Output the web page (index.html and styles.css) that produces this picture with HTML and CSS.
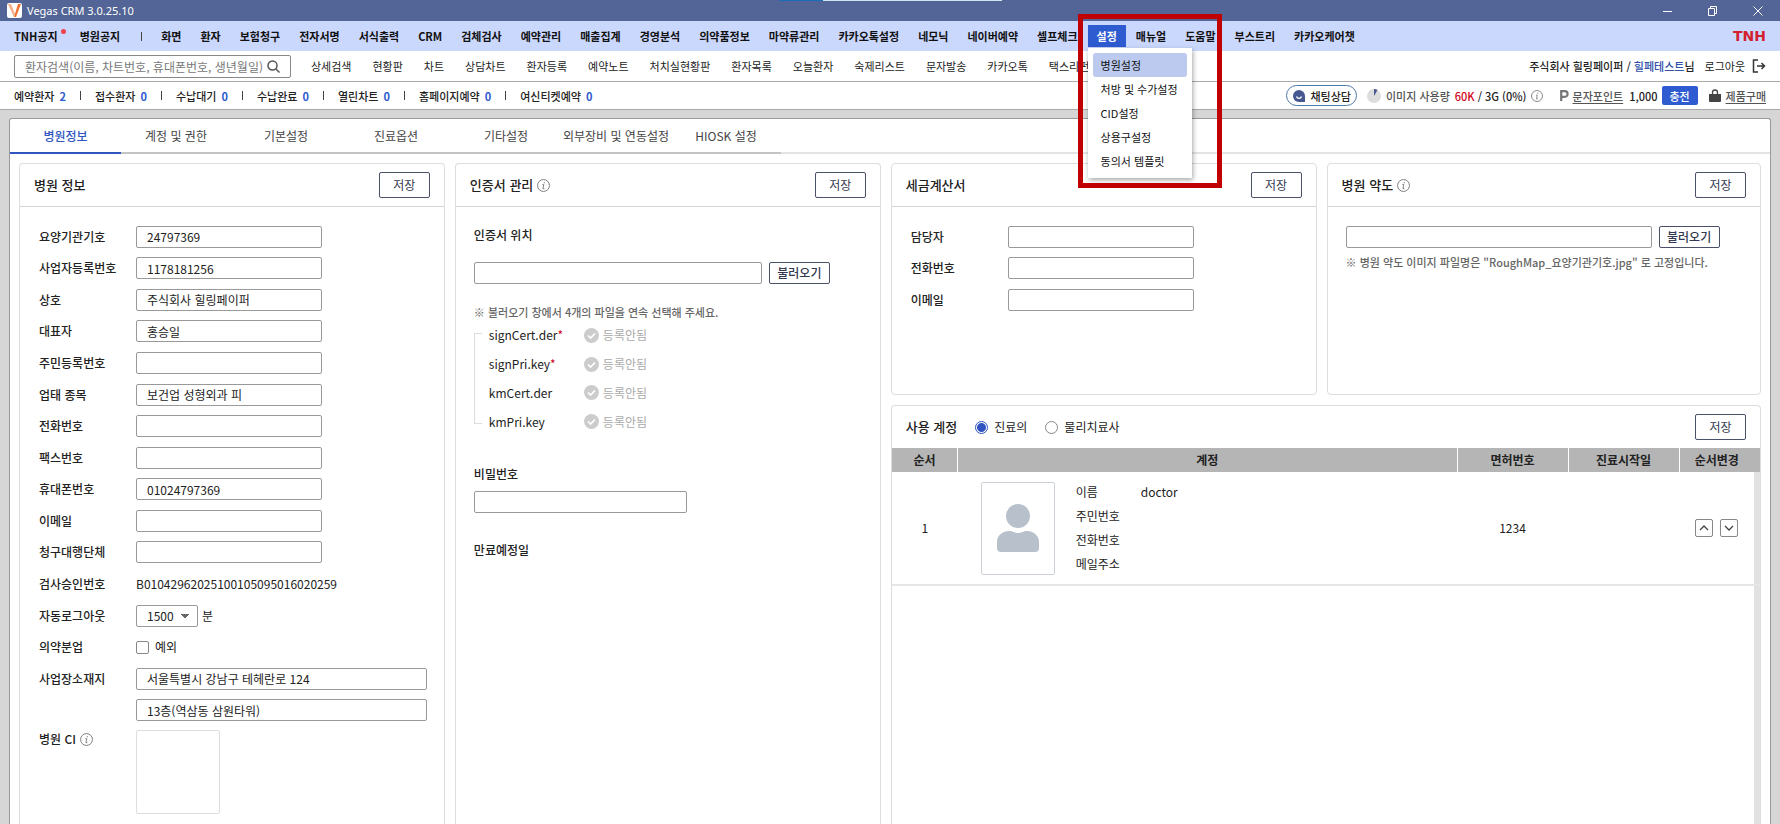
FILE: index.html
```html
<!DOCTYPE html>
<html lang="ko">
<head>
  <meta charset="UTF-8" />
  <meta name="viewport" content="width=device-width, initial-scale=1.0">
  <title>Vegas CRM 3.0.25.10</title>
  <link rel="stylesheet" href="styles.css">
</head>
<body>
  <!-- shared icons -->
  <svg class="sprite" width="0" height="0">
    <symbol id="info" viewBox="0 0 14 14">
      <circle cx="7" cy="7" r="6.4" fill="none" stroke="#777" />
      <path d="M7.8 3.2v1.4M5.800 6h1.500L6.400 10.400h1.600" fill="none" stroke="#777" />
    </symbol>
    <symbol id="check" viewBox="0 0 15 15">
      <circle cx="7.5" cy="7.5" r="7.5" fill="#ccc" />
      <path d="M4 7.5l2.6 2.6L11 5.5" fill="none" stroke="#fff" stroke-width="1.7" />
    </symbol>
  </svg>

  <header class="titlebar">
    <svg class="app-icon" width="15" height="15" viewBox="0 0 15 15">
      <rect width="15" height="15" rx="2" fill="#fff" />
      <path d="M1 1h3l4 10-1 3z" fill="#f3b08a" />
      <path d="M7 14L11 1h3L9 14z" fill="#ee7434" />
    </svg>
    <h1>Vegas CRM 3.0.25.10</h1>
    <div class="window-buttons">
      <button aria-label="최소화"><svg width="12" height="12"><path d="M1 6.500h9" stroke="#fff" /></svg></button>
      <button aria-label="이전 크기로"><svg width="12" height="12"><path d="M1.500 3.500h6v7h-6zM3.500 3.500v-2h6v7h-2" fill="none" stroke="#fff" /></svg></button>
      <button aria-label="닫기"><svg width="12" height="12"><path d="M1.500 1.500l9 9m0-9l-9 9" stroke="#fff" /></svg></button>
    </div>
    <span class="top-strip"></span>
  </header>

  <nav class="menubar">
    <a href="#" class="has-dot">TNH공지</a>
    <a href="#">병원공지</a>
    <span class="bar"></span>
    <a href="#">화면</a>
    <a href="#">환자</a>
    <a href="#">보험청구</a>
    <a href="#">전자서명</a>
    <a href="#">서식출력</a>
    <a href="#">CRM</a>
    <a href="#">검체검사</a>
    <a href="#">예약관리</a>
    <a href="#">매출집계</a>
    <a href="#">경영분석</a>
    <a href="#">의약품정보</a>
    <a href="#">마약류관리</a>
    <a href="#">카카오톡설정</a>
    <a href="#">네모닉</a>
    <a href="#">네이버예약</a>
    <a href="#">셀프체크</a>
    <div class="menu-open">
      <a href="#">설정</a>
      <div class="dropdown">
        <a href="#" class="selected">병원설정</a>
        <a href="#">처방 및 수가설정</a>
        <a href="#">CID설정</a>
        <a href="#">상용구설정</a>
        <a href="#">동의서 템플릿</a>
      </div>
      <span class="highlight"></span>
    </div>
    <a href="#">매뉴얼</a>
    <a href="#">도움말</a>
    <a href="#">부스트리</a>
    <a href="#">카카오케어챗</a>
    <span class="brand">TNH</span>
  </nav>

  <div class="toolbar">
    <div class="search">
      <input type="text" aria-label="환자검색" placeholder="환자검색(이름, 차트번호, 휴대폰번호, 생년월일)">
      <svg width="13" height="13" viewBox="0 0 13 13"><circle cx="5.500" cy="5.500" r="4.500" fill="none" stroke="#555" stroke-width="1.500" /><path d="M9 9l3.500 3.500" stroke="#555" stroke-width="1.500" /></svg>
    </div>
    <a href="#">상세검색</a>
    <a href="#">현황판</a>
    <a href="#">차트</a>
    <a href="#">상담차트</a>
    <a href="#">환자등록</a>
    <a href="#">예약노트</a>
    <a href="#">처치실현황판</a>
    <a href="#">환자목록</a>
    <a href="#">오늘환자</a>
    <a href="#">숙제리스트</a>
    <a href="#">문자발송</a>
    <a href="#">카카오톡</a>
    <a href="#">택스리펀드</a>
    <div class="user">
      <span>주식회사 힐링페이퍼 / <em>힐페테스트</em>님</span>
      <a href="#" class="logout">로그아웃
        <svg width="14" height="14" viewBox="0 0 14 14"><path d="M6 1H1.500v12H6M5 7h7M9.500 4l3 3-3 3" fill="none" stroke="#333" stroke-width="1.500" /></svg>
      </a>
    </div>
  </div>

  <div class="statusbar">
    <span>예약환자<b>2</b></span><i></i>
    <span>접수환자<b>0</b></span><i></i>
    <span>수납대기<b>0</b></span><i></i>
    <span>수납완료<b>0</b></span><i></i>
    <span>열린차트<b>0</b></span><i></i>
    <span>홈페이지예약<b>0</b></span><i></i>
    <span>여신티켓예약<b>0</b></span>
    <div class="status-right">
      <button class="chat">
        <svg width="12" height="12" viewBox="0 0 12 12"><path d="M6 0a6 6 0 1 0 0 12h6V6a6 6 0 0 0-6-6z" fill="#46588f" /><path d="M3.500 6.500a2.600 2.600 0 0 0 5 0" fill="none" stroke="#fff" stroke-width="1.300" /></svg>
        채팅상담
      </button>
      <svg class="pie" width="14" height="14" viewBox="0 0 14 14"><circle cx="7" cy="7" r="7" fill="#ddd" /><path d="M7 7V0a7 7 0 0 1 3.500 1z" fill="#46588f" /></svg>
      <span class="usage">이미지 사용량</span>
      <span class="used">60K</span>
      <span class="total">/ 3G (0%)</span>
      <svg class="info-small" width="12" height="12"><use href="#info" /></svg>
      <svg class="point-icon" width="9" height="11" viewBox="0 0 9 11"><path d="M1.200 11V1.200h3.600a2.800 2.800 0 0 1 0 5.600H1.200" fill="none" stroke="#777" stroke-width="2.200" /></svg>
      <a href="#">문자포인트</a>
      <span class="points">1,000</span>
      <button class="charge">충전</button>
      <svg class="bag" width="12" height="13" viewBox="0 0 12 13"><path d="M0 5h12v7a1 1 0 0 1-1 1H1a1 1 0 0 1-1-1z" fill="#444" /><path d="M3.500 6V3.500a2.500 2.500 0 0 1 5 0V6" fill="none" stroke="#444" stroke-width="1.300" /></svg>
      <a href="#">제품구매</a>
    </div>
  </div>

  <main class="page">
    <nav class="tabs">
      <a href="#" class="active">병원정보</a>
      <a href="#">계정 및 권한</a>
      <a href="#">기본설정</a>
      <a href="#">진료옵션</a>
      <a href="#">기타설정</a>
      <a href="#">외부장비 및 연동설정</a>
      <a href="#">HIOSK 설정</a>
    </nav>

    <div class="cards">
      <section class="card tall">
        <div class="card-head">
          <h2>병원 정보</h2>
          <button class="save">저장</button>
        </div>
        <div class="form form-hospital">
          <div class="row"><label for="orgNo">요양기관기호</label><input id="orgNo" type="text" value="24797369"></div>
          <div class="row"><label for="bizNo">사업자등록번호</label><input id="bizNo" type="text" value="1178181256"></div>
          <div class="row"><label for="company">상호</label><input id="company" type="text" value="주식회사 힐링페이퍼"></div>
          <div class="row"><label for="ceo">대표자</label><input id="ceo" type="text" value="홍승일"></div>
          <div class="row"><label for="rrn">주민등록번호</label><input id="rrn" type="text"></div>
          <div class="row"><label for="bizType">업태 종목</label><input id="bizType" type="text" value="보건업 성형외과 피"></div>
          <div class="row"><label for="tel">전화번호</label><input id="tel" type="text"></div>
          <div class="row"><label for="fax">팩스번호</label><input id="fax" type="text"></div>
          <div class="row"><label for="mobile">휴대폰번호</label><input id="mobile" type="text" value="01024797369"></div>
          <div class="row"><label for="email">이메일</label><input id="email" type="text"></div>
          <div class="row"><label for="agency">청구대행단체</label><input id="agency" type="text"></div>
          <div class="row"><span class="label">검사승인번호</span><span>B01042962025100105095016020259</span></div>
          <div class="row"><label for="logout">자동로그아웃</label>
            <select id="logout"><option>1500</option></select><span class="unit">분</span>
          </div>
          <div class="row"><span class="label">의약분업</span><input id="except" type="checkbox"><label for="except" class="option">예외</label></div>
          <div class="row"><label for="addr1">사업장소재지</label><input id="addr1" class="wide" type="text" value="서울특별시 강남구 테헤란로 124"></div>
          <div class="row"><label for="addr2"></label><input id="addr2" class="wide" type="text" aria-label="상세주소" value="13층(역삼동 삼원타워)"></div>
        </div>
        <div class="ci">
          <span class="label">병원 CI <svg width="13" height="13"><use href="#info" /></svg></span>
          <div class="ci-box"></div>
        </div>
      </section>

      <section class="card tall">
        <div class="card-head">
          <h2>인증서 관리</h2>
          <svg width="13" height="13"><use href="#info" /></svg>
          <button class="save">저장</button>
        </div>
        <div class="cert">
          <label for="certPath">인증서 위치</label>
          <div class="file-row">
            <input id="certPath" type="text">
            <button class="load">불러오기</button>
          </div>
          <p class="note">※ 불러오기 창에서 4개의 파일을 연속 선택해 주세요.</p>
          <ul class="files">
            <li><span>signCert.der<em>*</em></span><svg width="15" height="15"><use href="#check" /></svg>등록안됨</li>
            <li><span>signPri.key<em>*</em></span><svg width="15" height="15"><use href="#check" /></svg>등록안됨</li>
            <li><span>kmCert.der</span><svg width="15" height="15"><use href="#check" /></svg>등록안됨</li>
            <li><span>kmPri.key</span><svg width="15" height="15"><use href="#check" /></svg>등록안됨</li>
          </ul>
          <label for="certPw">비밀번호</label>
          <input id="certPw" type="password">
          <p class="expire">만료예정일</p>
        </div>
      </section>

      <section class="card">
        <div class="card-head">
          <h2>세금계산서</h2>
          <button class="save">저장</button>
        </div>
        <div class="form form-tax">
          <div class="row"><label for="manager">담당자</label><input id="manager" type="text"></div>
          <div class="row"><label for="taxTel">전화번호</label><input id="taxTel" type="text"></div>
          <div class="row"><label for="taxEmail">이메일</label><input id="taxEmail" type="text"></div>
        </div>
      </section>

      <section class="card">
        <div class="card-head">
          <h2>병원 약도</h2>
          <svg width="13" height="13"><use href="#info" /></svg>
          <button class="save">저장</button>
        </div>
        <div class="map">
          <div class="file-row">
            <input type="text" aria-label="약도 파일">
            <button class="load">불러오기</button>
          </div>
          <p class="note">※ 병원 약도 이미지 파일명은 "RoughMap_요양기관기호.jpg" 로 고정입니다.</p>
        </div>
      </section>

      <section class="card accounts">
        <div class="card-head">
          <h2>사용 계정</h2>
          <input id="doctor" type="radio" name="role" checked><label for="doctor">진료의</label>
          <input id="therapist" type="radio" name="role"><label for="therapist">물리치료사</label>
          <button class="save">저장</button>
        </div>
        <table>
          <colgroup><col class="c-no"><col><col class="c-mid"><col class="c-mid"><col class="c-order"><col class="c-scroll"></colgroup>
          <thead>
            <tr><th>순서</th><th>계정</th><th>면허번호</th><th>진료시작일</th><th>순서변경</th><th class="end"></th></tr>
          </thead>
          <tbody>
            <tr>
              <td>1</td>
              <td>
                <div class="person">
                  <div class="photo">
                    <svg width="42" height="48" viewBox="0 0 42 48" fill="#b8c0cc"><circle cx="21" cy="12" r="12" /><path d="M0 44V38C0 31 6 27 12 27c4 0 5 2 9 2s5-2 9-2c6 0 12 4 12 11v6a4 4 0 0 1-4 4H4a4 4 0 0 1-4-4z" /></svg>
                  </div>
                  <dl>
                    <dt>이름</dt><dd>doctor</dd>
                    <dt>주민번호</dt><dd></dd>
                    <dt>전화번호</dt><dd></dd>
                    <dt>메일주소</dt><dd></dd>
                  </dl>
                </div>
              </td>
              <td>1234</td>
              <td></td>
              <td>
                <div class="order">
                  <button aria-label="위로"><svg width="12" height="12"><path d="M2 8l4-4 4 4" fill="none" stroke="#444" stroke-width="1.300" /></svg></button>
                  <button aria-label="아래로"><svg width="12" height="12"><path d="M2 4l4 4 4-4" fill="none" stroke="#444" stroke-width="1.300" /></svg></button>
                </div>
              </td>
              <td class="end"></td>
            </tr>
          </tbody>
        </table>
        <div class="rest"></div>
      </section>
    </div>
  </main>
</body>
</html>
```
FILE: styles.css
```css
* {
  box-sizing: border-box;
}
body {
  margin: 0;
  height: 100vh;
  display: flex;
  flex-direction: column;
  overflow: hidden;
  background: #d6d6d6;
  color: #222;
  font-family: "Noto Sans CJK KR", sans-serif;
  font-size: 12px;
  line-height: 18px;
}
a {
  color: inherit;
  text-decoration: none;
}
button, input, select {
  font: inherit;
  color: inherit;
}
button {
  padding: 0;
  background: #fff;
  border: 1px solid #4a5068;
  border-radius: 2px;
  color: #333850;
}
h1, h2, p, ul, dl, dd {
  margin: 0;
  padding: 0;
}
em {
  font-style: normal;
}
svg {
  flex: none;
}
.sprite {
  position: absolute;
}

/* title bar */
.titlebar {
  position: relative;
  display: flex;
  align-items: center;
  flex: none;
  height: 21px;
  padding: 0 16px 0 7px;
  background: #536596;
  color: #fff;
}
.titlebar h1 {
  margin-left: 5px;
  font: 11px "Noto Sans", sans-serif;
}
.window-buttons {
  display: flex;
  gap: 33px;
  margin-left: auto;
}
.window-buttons button {
  display: flex;
  background: none;
  border: none;
}
.top-strip {
  position: absolute;
  top: 0;
  left: 779px;
  width: 223px;
  height: 1px;
  background: linear-gradient(to right, #1b6db8 44px, #cfe3f2 44px);
}

/* menu */
.menubar {
  display: flex;
  align-items: center;
  flex: none;
  gap: 1px;
  height: 30px;
  padding: 0 14px 0 5px;
  background: #cbd8fe;
  color: #111;
  font-size: 11px;
  font-weight: bold;
}
.menubar > a, .menu-open > a {
  display: block;
  padding: 0 9px;
  line-height: 22px;
  white-space: nowrap;
}
.has-dot {
  position: relative;
  margin-right: 3px;
}
.has-dot::after {
  content: "";
  position: absolute;
  top: 4px;
  right: 1px;
  width: 5px;
  height: 5px;
  border-radius: 50%;
  background: #f0404c;
}
.bar {
  width: 1px;
  height: 9px;
  margin: 0 9px 0 11px;
  background: #444;
}
.menu-open {
  position: relative;
  z-index: 2;
}
.menu-open > a {
  background: #2f5bd0;
  color: #fff;
}
.dropdown {
  position: absolute;
  top: 23px;
  left: 0;
  width: 104px;
  padding: 5px;
  background: #fff;
  box-shadow: 1px 2px 5px rgba(0, 0, 0, 0.35);
  font-weight: normal;
}
.dropdown a {
  display: block;
  padding-left: 8px;
  line-height: 24px;
  border-radius: 3px;
  white-space: nowrap;
}
.dropdown .selected {
  background: #bccaf0;
}
.highlight {
  position: absolute;
  top: -11px;
  left: -10px;
  width: 144px;
  height: 174px;
  border: 5px solid #c00000;
  pointer-events: none;
}
.brand {
  margin-left: auto;
  color: #d3202f;
  font: bold 14px "DejaVu Sans", sans-serif;
}

/* search and shortcuts */
.toolbar {
  display: flex;
  align-items: center;
  flex: none;
  gap: 21px;
  height: 31px;
  padding: 0 14px;
  background: #fff;
  border-bottom: 1px solid #aaa;
  font-size: 11px;
  white-space: nowrap;
}
.search {
  display: flex;
  align-items: center;
  width: 277px;
  height: 23px;
  margin-right: -1px;
  padding: 0 10px;
  border: 1px solid #888;
  border-radius: 2px;
}
.user {
  display: flex;
  gap: 10px;
  margin-left: auto;
}
.user span {
  font-weight: 500;
}
.user em {
  color: #2f4fa8;
}
.logout {
  display: flex;
  align-items: center;
  gap: 7px;
}

/* counters */
.statusbar {
  display: flex;
  align-items: center;
  flex: none;
  gap: 14px;
  height: 28px;
  padding: 0 14px;
  background: #fff;
  border-bottom: 1px solid #aaa;
  font-size: 11px;
  font-weight: 500;
  white-space: nowrap;
}
.statusbar b {
  margin-left: 5px;
  color: #2f5bd0;
  font-weight: bold;
}
.statusbar i {
  width: 1px;
  height: 9px;
  background: #444;
}
.status-right {
  display: flex;
  align-items: center;
  margin-left: auto;
}
.status-right a {
  color: #555;
  text-decoration: underline;
  text-underline-offset: 2px;
}
.chat {
  display: flex;
  align-items: center;
  gap: 5px;
  height: 21px;
  padding: 0 5px 0 6px;
  border-color: #4a7aa8;
  border-radius: 11px;
  color: #222;
  font-weight: 500;
}
.pie {
  margin: 0 5px 0 10px;
}
.usage {
  color: #555;
}
.used {
  margin: 0 3px 0 5px;
  color: #d0021b;
}
.info-small {
  margin: 0 17px 0 4px;
}
.point-icon {
  margin-right: 4px;
}
.points {
  margin: 0 4px 0 6px;
}
.charge {
  width: 36px;
  height: 19px;
  background: #2f5bd0;
  border: none;
  color: #fff;
  font-weight: 500;
}
.bag {
  margin: 0 5px 0 11px;
}

/* page */
.page {
  display: flex;
  flex-direction: column;
  flex: 1;
  min-height: 0;
  margin: 8px 9px 0;
  background: #fff;
  border: 1px solid #999;
  border-bottom: none;
  border-radius: 3px 3px 0 0;
}
.tabs {
  display: flex;
  flex: none;
  border-bottom: 2px solid #e4e4e4;
}
.tabs a {
  width: 110px;
  height: 35px;
  margin-bottom: -2px;
  border-bottom: 2px solid #c4c4c4;
  color: #444;
  line-height: 34px;
  text-align: center;
  white-space: nowrap;
}
.tabs .active {
  width: 111px;
  border-color: #3055c0;
  color: #3055c0;
  font-weight: 500;
}
.cards {
  display: grid;
  grid-template-columns: 50fr 50fr 50fr 51fr;
  grid-template-rows: 232px 1fr;
  gap: 10px;
  flex: 1;
  min-height: 0;
  padding: 9px 9px 0;
}
.card {
  min-width: 0;
  border: 1px solid #ddd;
  border-radius: 4px;
}
.tall {
  grid-row: 1 / 3;
  border-bottom: none;
  border-radius: 4px 4px 0 0;
}
.card-head {
  display: flex;
  align-items: center;
  height: 43px;
  padding: 0 14px;
  border-bottom: 1px solid #d4d4d4;
}
.card-head h2 {
  margin-right: 4px;
  font-size: 13px;
  font-weight: 500;
}
.save {
  width: 51px;
  height: 26px;
  margin-left: auto;
}

/* forms */
input[type="text"], input[type="password"], select {
  height: 22px;
  padding: 0 10px;
  background: #fff;
  border: 1px solid #999;
  border-radius: 2px;
}
.search input[type="text"] {
  flex: 1;
  min-width: 0;
  height: 20px;
  padding: 0;
  background: none;
  border: none;
  outline: none;
  font-size: 12px;
}
.search input::placeholder {
  color: #777;
}
.form {
  display: grid;
  grid-auto-rows: 1fr;
  padding: 0 18px 0 19px;
}
.form-hospital {
  height: 505px;
  margin-top: 14px;
}
.form-tax {
  height: 95px;
  margin-top: 14px;
}
.row {
  display: flex;
  align-items: center;
}
.row label:first-child, .label {
  flex: none;
  width: 97px;
  font-weight: 500;
}
.row input[type="text"] {
  width: 186px;
}
.row input.wide {
  width: 291px;
}
select {
  width: 62px;
  appearance: none;
  background: conic-gradient(from 315deg at 50% 100%, #666 90deg, transparent 0) no-repeat 44px 8px / 8px 4px;
}
.unit {
  margin-left: 4px;
}
input[type="checkbox"], input[type="radio"] {
  appearance: none;
  width: 13px;
  height: 13px;
  margin: 0;
  border: 1px solid #888;
  border-radius: 2px;
}
input[type="radio"] {
  border-radius: 50%;
}
input[type="radio"]:checked {
  border-color: #3055c0;
  background: radial-gradient(#3055c0 4px, #fff 5px);
}
.option {
  margin-left: 6px;
}
.ci {
  display: flex;
  padding: 4px 19px 0;
}
.ci .label {
  display: flex;
  align-items: center;
  gap: 4px;
  height: 18px;
}
.ci-box {
  width: 84px;
  height: 84px;
  border: 1px solid #ddd;
  border-radius: 2px;
}

/* certificate */
.cert {
  display: flex;
  flex-direction: column;
  align-items: flex-start;
  padding: 19px 18px 0;
}
.cert label, .expire {
  font-weight: 500;
}
.cert .file-row {
  width: 356px;
  margin: 18px 0 19px;
}
.file-row {
  display: flex;
  gap: 7px;
}
.file-row input {
  flex: 1;
  min-width: 0;
}
.load {
  width: 61px;
  height: 22px;
  font-weight: 500;
}
.note {
  color: #666;
  font-size: 11px;
  font-weight: 500;
}
.files {
  position: relative;
  display: grid;
  grid-auto-rows: 1fr;
  height: 115px;
  margin-bottom: 29px;
  padding-left: 15px;
  list-style: none;
}
.files::before {
  content: "";
  position: absolute;
  top: 12px;
  bottom: 12px;
  left: 0;
  width: 7px;
  border: 1px solid #ddd;
  border-right: none;
}
.files li {
  display: flex;
  align-items: center;
  color: #aaa;
}
.files span {
  width: 95px;
  color: #222;
}
.files em {
  color: #d0021b;
}
.files svg {
  margin-right: 4px;
}
.cert input[type="password"] {
  width: 213px;
  margin: 8px 0 28px;
}

/* map */
.map {
  padding: 19px 18px 0;
}
.map .file-row {
  width: 374px;
  margin-bottom: 5px;
}

/* accounts */
.accounts {
  grid-column: 3 / 5;
  display: flex;
  flex-direction: column;
  border-bottom: none;
  border-radius: 4px 4px 0 0;
}
.accounts .card-head {
  flex: none;
  height: 42px;
  border: none;
}
.accounts .card-head input {
  margin: 0 6px 0 14px;
}
.accounts .card-head label {
  margin-right: 4px;
}
table {
  width: 100%;
  table-layout: fixed;
  border-collapse: collapse;
}
.c-no {
  width: 66px;
}
.c-mid {
  width: 111px;
}
.c-order {
  width: 75px;
}
.c-scroll {
  width: 6px;
}
th {
  height: 24px;
  padding: 0;
  background: #b5b5b5;
  border-left: 1px solid #fff;
}
th:first-child, th.end {
  border: none;
}
td {
  height: 113px;
  padding: 0;
  border-bottom: 2px solid #e6e6e6;
  text-align: center;
}
td.end {
  background: #e2e2e2;
}
.person {
  display: flex;
  align-items: center;
  gap: 21px;
  padding-left: 23px;
  text-align: left;
}
.photo {
  display: flex;
  align-items: center;
  justify-content: center;
  width: 74px;
  height: 93px;
  border: 1px solid #ccd2d8;
  border-radius: 2px;
}
dl {
  display: grid;
  grid-template-columns: 65px auto;
  line-height: 24px;
}
.order {
  display: flex;
  justify-content: center;
  gap: 7px;
}
.order button {
  display: flex;
  align-items: center;
  justify-content: center;
  width: 18px;
  height: 18px;
  border-color: #888;
}
.rest {
  flex: 1;
  border-right: 6px solid #e2e2e2;
}
```
